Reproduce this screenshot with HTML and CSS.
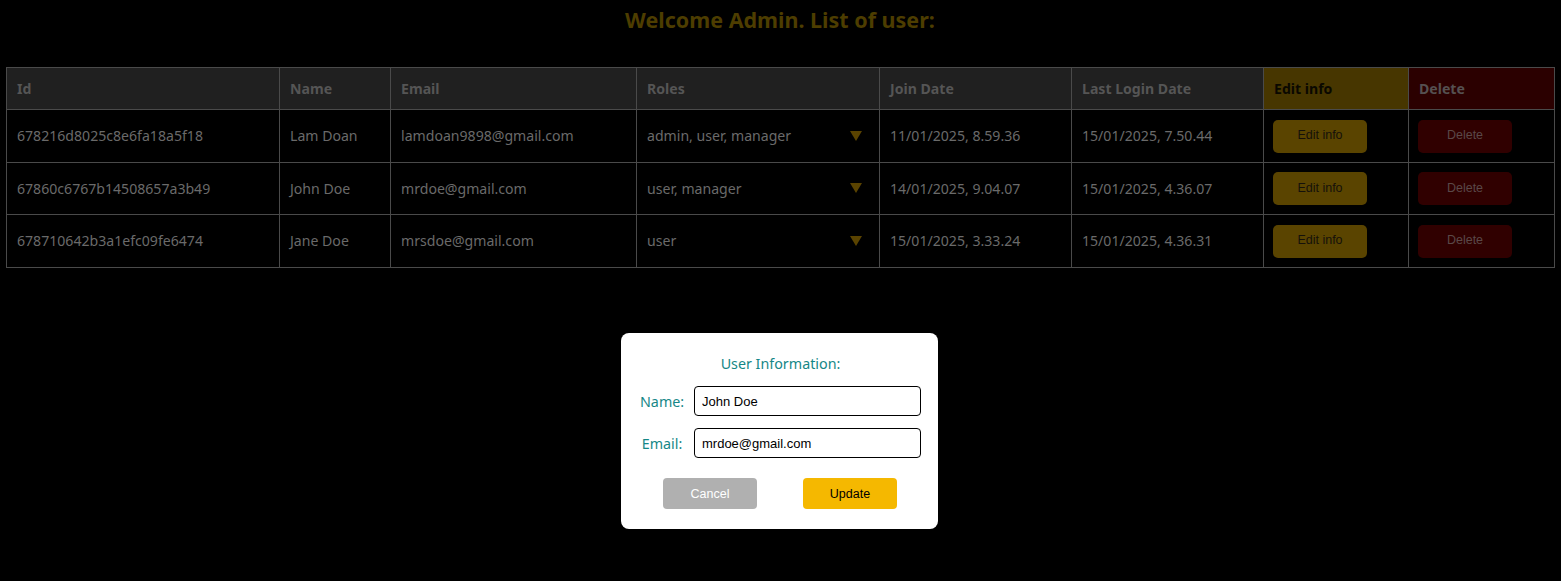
FILE: index.html
```html
<!DOCTYPE html>
<html lang="en">
<head>
<meta charset="utf-8">
<title>Admin - Users</title>
<link rel="stylesheet" href="styles.css">
</head>
<body>
<div class="page">
  <h2 class="title">Welcome Admin. List of user:</h2>
  <table class="users">
    <colgroup>
      <col class="c-id"><col class="c-name"><col class="c-email"><col class="c-roles">
      <col class="c-join"><col class="c-last"><col class="c-edit"><col class="c-del">
    </colgroup>
    <thead>
      <tr>
        <th>Id</th><th>Name</th><th>Email</th><th>Roles</th><th>Join Date</th><th>Last Login Date</th>
        <th class="th-edit">Edit info</th><th class="th-del">Delete</th>
      </tr>
    </thead>
    <tbody>
      <tr>
        <td>678216d8025c8e6fa18a5f18</td><td>Lam Doan</td><td>lamdoan9898@gmail.com</td>
        <td><div class="roles"><span>admin, user, manager</span><svg class="arrow" viewBox="0 0 12 10" width="12" height="10"><path d="M0 0H12L6 10Z"/></svg></div></td>
        <td>11/01/2025, 8.59.36</td><td>15/01/2025, 7.50.44</td>
        <td><button class="btn-edit">Edit info</button></td><td><button class="btn-del">Delete</button></td>
      </tr>
      <tr>
        <td>67860c6767b14508657a3b49</td><td>John Doe</td><td>mrdoe@gmail.com</td>
        <td><div class="roles"><span>user, manager</span><svg class="arrow" viewBox="0 0 12 10" width="12" height="10"><path d="M0 0H12L6 10Z"/></svg></div></td>
        <td>14/01/2025, 9.04.07</td><td>15/01/2025, 4.36.07</td>
        <td><button class="btn-edit">Edit info</button></td><td><button class="btn-del">Delete</button></td>
      </tr>
      <tr>
        <td>678710642b3a1efc09fe6474</td><td>Jane Doe</td><td>mrsdoe@gmail.com</td>
        <td><div class="roles"><span>user</span><svg class="arrow" viewBox="0 0 12 10" width="12" height="10"><path d="M0 0H12L6 10Z"/></svg></div></td>
        <td>15/01/2025, 3.33.24</td><td>15/01/2025, 4.36.31</td>
        <td><button class="btn-edit">Edit info</button></td><td><button class="btn-del">Delete</button></td>
      </tr>
    </tbody>
  </table>
</div>

<div class="modal">
  <div class="modal-title">User Information:</div>
  <div class="field">
    <label class="lbl">Name:</label>
    <input class="inp" type="text" value="John Doe">
  </div>
  <div class="field">
    <label class="lbl">Email:</label>
    <input class="inp" type="text" value="mrdoe@gmail.com">
  </div>
  <div class="actions">
    <button class="btn-cancel">Cancel</button>
    <button class="btn-update">Update</button>
  </div>
</div>
</body>
</html>
```

FILE: styles.css
```css
html, body {
  margin: 0;
  padding: 0;
  background: #000;
  height: 100%;
}
body {
  font-family: "Noto Sans", "Open Sans", sans-serif;
  position: relative;
  overflow: hidden;
}
.page {
  padding: 0 7px 0 6px;
}
.title {
  margin: 0;
  height: 67px;
  padding-top: 4px;
  box-sizing: border-box;
  text-align: center;
  font-size: 21.5px;
  font-weight: 700;
  color: #4d3d00;
  line-height: 32px;
}
.users {
  width: 100%;
  border-collapse: collapse;
  table-layout: fixed;
  font-size: 14.1px;
  border: 1px solid #4a4a4a;
}
.c-id { width: 273px; }
.c-name { width: 111px; }
.c-email { width: 246px; }
.c-roles { width: 243px; }
.c-join { width: 192px; }
.c-last { width: 192px; }
.c-edit { width: 145px; }
.c-del { width: 146px; }
.users th, .users td {
  border: 1px solid #4a4a4a;
  padding: 0 10px;
  text-align: left;
  white-space: nowrap;
  overflow: hidden;
}
.users th {
  height: 41px;
  background: #202020;
  color: #555555;
  font-weight: 700;
  font-size: 14.1px;
}
.users th.th-edit {
  background: #473600;
  color: #0a0800;
}
.users th.th-del {
  background: #2b0000;
  color: #555050;
}
.users td {
  height: 51.6px;
  color: #6a6a6a;
}
.roles {
  display: flex;
  justify-content: space-between;
  align-items: center;
  padding-right: 7px;
}
.arrow {
  fill: #5a4300;
  display: block;
}
.btn-edit, .btn-del {
  display: block;
  width: 94px;
  height: 33px;
  border: none;
  border-radius: 5px;
  font-family: "Liberation Sans", Arial, sans-serif;
  font-size: 12.5px;
  margin: 1px 0 0 -1px;
  padding: 0 0 2px 0;
}
.btn-edit {
  background: #5a4400;
  color: #15110a;
}
.btn-del {
  background: #300000;
  color: #5a4848;
}
.modal {
  position: absolute;
  top: 333px;
  left: 621px;
  width: 317px;
  height: 196px;
  box-sizing: border-box;
  background: #fff;
  border-radius: 8px;
  padding: 20px 17px 19px 19px;
  display: flex;
  flex-direction: column;
}
.modal-title {
  text-align: center;
  color: #168787;
  font-size: 14.3px;
  line-height: 22px;
  margin: 0 0 11px 0;
}
.field {
  display: grid;
  grid-template-columns: 44px 1fr;
  column-gap: 10px;
  align-items: center;
  margin-bottom: 12px;
}
.lbl {
  color: #168787;
  font-size: 14.3px;
  text-align: center;
}
.inp {
  height: 30px;
  box-sizing: border-box;
  border: 1px solid #000;
  border-radius: 4px;
  padding: 0 7px;
  font-family: "Liberation Sans", Arial, sans-serif;
  font-size: 13px;
  color: #000;
  width: 100%;
}
.actions {
  display: flex;
  justify-content: center;
  gap: 46px;
  margin-top: 8px;
  margin-left: -1px;
}
.btn-cancel, .btn-update {
  width: 94px;
  height: 31px;
  border: none;
  border-radius: 4px;
  font-family: "Liberation Sans", Arial, sans-serif;
  font-size: 12.5px;
}
.btn-cancel {
  background: #b0b0b0;
  color: #fff;
}
.btn-update {
  background: #f5b800;
  color: #000;
}
```
